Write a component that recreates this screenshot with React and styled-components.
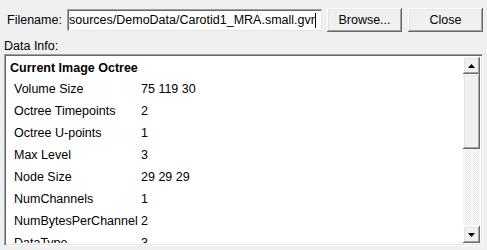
import React from "react";
import styled, { createGlobalStyle } from "styled-components";

const Global = createGlobalStyle`
  html, body { margin: 0; padding: 0; background: #f0f0f0; }
  body { font-family: "Liberation Sans", Arial, sans-serif; font-size: 12.5px; color: #000; }
`;

const Window = styled.div`
  width: 487px;
  height: 250px;
  box-sizing: border-box;
  padding: 8px 4px 0 4px;
  display: flex;
  flex-direction: column;
  overflow: hidden;
`;

const TopRow = styled.div`
  display: flex;
  align-items: center;
  height: 24px;
`;

const Label = styled.span`
  margin-left: 3px;
  width: 60px;
  white-space: nowrap;
`;

const TextBox = styled.div`
  width: 255px;
  height: 22px;
  box-sizing: border-box;
  background: #fff;
  border-top: 1px solid #a0a0a0;
  border-left: 1px solid #a0a0a0;
  border-right: 1px solid #e3e3e3;
  border-bottom: 1px solid #e3e3e3;
  box-shadow: inset 1px 1px 0 #696969;
  display: flex;
  align-items: center;
  padding-left: 1px;
  overflow: hidden;
  white-space: nowrap;
`;

const Caret = styled.span`
  display: inline-block;
  flex: none;
  width: 1px;
  height: 15px;
  background: #000;
  margin-left: 0;
`;

const Button = styled.button`
  font: inherit;
  width: ${p => p.$w}px;
  height: 24px;
  margin-left: ${p => p.$ml}px;
  background: #f0f0f0;
  border: none;
  box-shadow: inset -1px -1px 0 #696969, inset 1px 1px 0 #fff, inset -2px -2px 0 #a0a0a0, inset 2px 2px 0 #e3e3e3;
  padding: 0;
  color: #000;
`;

const SectionLabel = styled.div`
  margin-top: 7px;
  height: 14px;
  line-height: 14px;
`;

const Panel = styled.div`
  margin-top: 1px;
  width: 479px;
  height: 192px;
  box-sizing: border-box;
  border-top: 1px solid #a0a0a0;
  border-left: 1px solid #a0a0a0;
  border-right: 1px solid #fff;
  border-bottom: 1px solid #fff;
  box-shadow: inset 1px 1px 0 #696969, inset -1px -1px 0 #e3e3e3;
  background: #fff;
  display: flex;
  padding: 2px;
  overflow: hidden;
`;

const Content = styled.div`
  flex: 1;
  padding: 1px 0 0 3px;
  overflow: hidden;
`;

const Heading = styled.div`
  font-weight: bold;
  height: 20px;
  line-height: 20px;
`;

const Row = styled.div`
  display: grid;
  grid-template-columns: 127px 1fr;
  padding-left: 4px;
  height: 22px;
  line-height: 22px;
  white-space: nowrap;
`;

const ScrollBar = styled.div`
  width: 17px;
  display: flex;
  flex-direction: column;
  background-color: #f4f4f4;
  background-image: repeating-conic-gradient(#ffffff 0 25%, #e8e8e8 0 50%);
  background-size: 2px 2px;
`;

const ScrollBtn = styled.div`
  height: 17px;
  background: #f0f0f0;
  box-shadow: inset -1px -1px 0 #696969, inset 1px 1px 0 #fff, inset -2px -2px 0 #a0a0a0, inset 2px 2px 0 #e3e3e3;
  display: flex;
  align-items: center;
  justify-content: center;
`;

const Thumb = styled.div`
  height: 75px;
  background: #f0f0f0;
  box-shadow: inset -1px -1px 0 #696969, inset 1px 1px 0 #fff, inset -2px -2px 0 #a0a0a0, inset 2px 2px 0 #e3e3e3;
`;

const Track = styled.div`
  flex: 1;
`;

const Arrow = ({ down }) => (
  <svg width="7" height="4" viewBox="0 0 7 4">
    {down ? <polygon points="0,0 7,0 3.5,4" fill="#000" /> : <polygon points="0,4 7,4 3.5,0" fill="#000" />}
  </svg>
);

const rows = [
  ["Volume Size", "75 119 30"],
  ["Octree Timepoints", "2"],
  ["Octree U-points", "1"],
  ["Max Level", "3"],
  ["Node Size", "29 29 29"],
  ["NumChannels", "1"],
  ["NumBytesPerChannel", "2"],
  ["DataType", "3"],
];

export default function App() {
  return (
    <>
      <Global />
      <Window>
        <TopRow>
          <Label>Filename:</Label>
          <TextBox>sources/DemoData/Carotid1_MRA.small.gvr<Caret /></TextBox>
          <Button $w={75} $ml={5}>Browse...</Button>
          <Button $w={75} $ml={6}>Close</Button>
        </TopRow>
        <SectionLabel>Data Info:</SectionLabel>
        <Panel>
          <Content>
            <Heading>Current Image Octree</Heading>
            {rows.map(([k, v]) => (
              <Row key={k}><span>{k}</span><span>{v}</span></Row>
            ))}
          </Content>
          <ScrollBar>
            <ScrollBtn><Arrow /></ScrollBtn>
            <Thumb />
            <Track />
            <ScrollBtn><Arrow down /></ScrollBtn>
          </ScrollBar>
        </Panel>
      </Window>
    </>
  );
}
